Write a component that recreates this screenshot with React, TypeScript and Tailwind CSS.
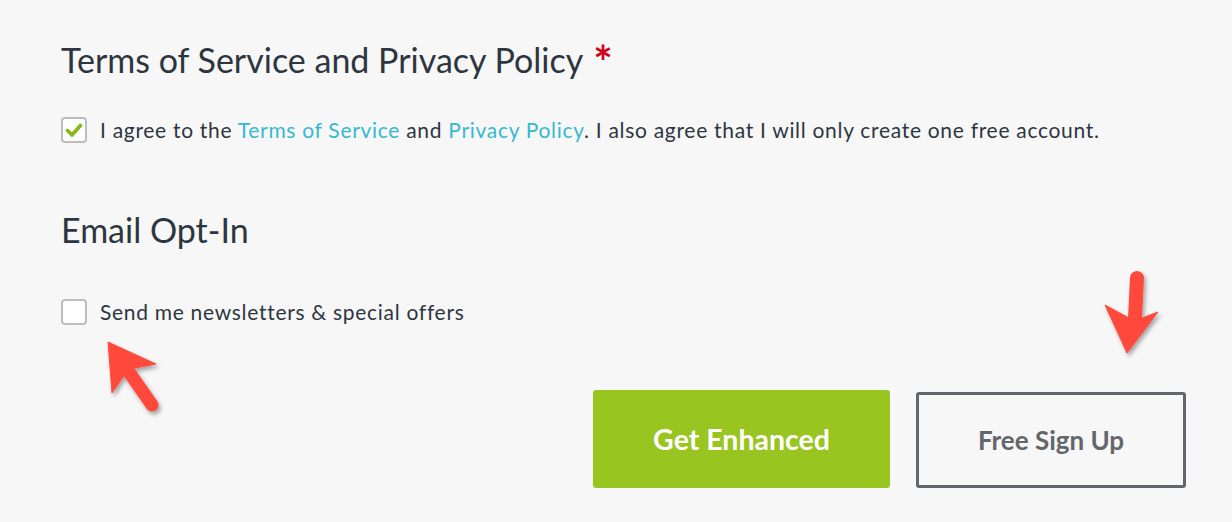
function Box({ checked }: { checked?: boolean }) {
  return (
    <span className="flex h-[26px] w-[26px] shrink-0 items-center justify-center rounded-[4px] border-2 border-[#bdbdbd] bg-white">
      {checked && (
        <svg width="18" height="18" viewBox="0 0 18 18">
          <path d="M2.5 9.5 L7 14 L15.5 4.5" fill="none" stroke="#86b817" strokeWidth="3.6" strokeLinecap="round" strokeLinejoin="round" />
        </svg>
      )}
    </span>
  );
}

function Arrows() {
  return (
    <svg className="pointer-events-none absolute left-0 top-0" width="1232" height="522" viewBox="0 0 1232 522">
      <defs>
        <filter id="sh" x="-20%" y="-20%" width="140%" height="140%">
          <feDropShadow dx="2" dy="3" stdDeviation="2" floodColor="#000" floodOpacity="0.35" />
        </filter>
      </defs>
      <g filter="url(#sh)" fill="#ff4a3d" stroke="#ff4a3d">
        <polygon points="108,342 156,364 135,368 123,377 112,393" strokeWidth="1" strokeLinejoin="round" />
        <line x1="129" y1="372" x2="152" y2="405" strokeWidth="13" strokeLinecap="round" />
        <polygon points="1127,353 1105,305 1129,318 1142,318 1158,312" strokeWidth="1" strokeLinejoin="round" />
        <line x1="1135" y1="318" x2="1137" y2="278" strokeWidth="14" strokeLinecap="round" />
      </g>
    </svg>
  );
}

export default function App() {
  return (
    <div
      className="relative h-[522px] w-[1232px] overflow-hidden bg-[#f7f7f7] text-[#2d3640]"
      style={{ fontFamily: "Lato, 'Open Sans', sans-serif" }}
    >
      <div className="flex flex-col pl-[61px] pr-[46px] pt-[38px]">
        <h2 className="flex items-start text-[34px] leading-[44px]">
          Terms of Service and Privacy Policy
          <span className="ml-[10px] mt-[2px] text-[46px] font-bold leading-[44px] text-[#d0021b]">*</span>
        </h2>
        <label className="mt-[32px] flex items-center gap-[13px] text-[21px] leading-[28px] tracking-[0.7px]">
          <Box checked />
          <span>
            I agree to the <a className="text-[#36b9d0]">Terms of Service</a> and{" "}
            <a className="text-[#36b9d0]">Privacy Policy</a>. I also agree that I will only create one free account.
          </span>
        </label>

        <h2 className="mt-[64px] text-[34px] leading-[44px]">Email Opt-In</h2>
        <label className="mt-[46px] flex items-center gap-[13px] text-[21px] leading-[28px] tracking-[0.7px]">
          <Box />
          <span>Send me newsletters &amp; special offers</span>
        </label>

        <div className="mt-[64px] flex justify-end gap-[26px]">
          <button className="h-[98px] w-[297px] rounded-[3px] bg-[#99c520] text-[28.5px] font-bold text-white">
            Get Enhanced
          </button>
          <button className="mt-[2px] h-[96px] w-[270px] rounded-[3px] border-[3px] border-[#63676c] text-[26px] font-bold text-[#63676c]">
            Free Sign Up
          </button>
        </div>
      </div>
      <Arrows />
    </div>
  );
}
